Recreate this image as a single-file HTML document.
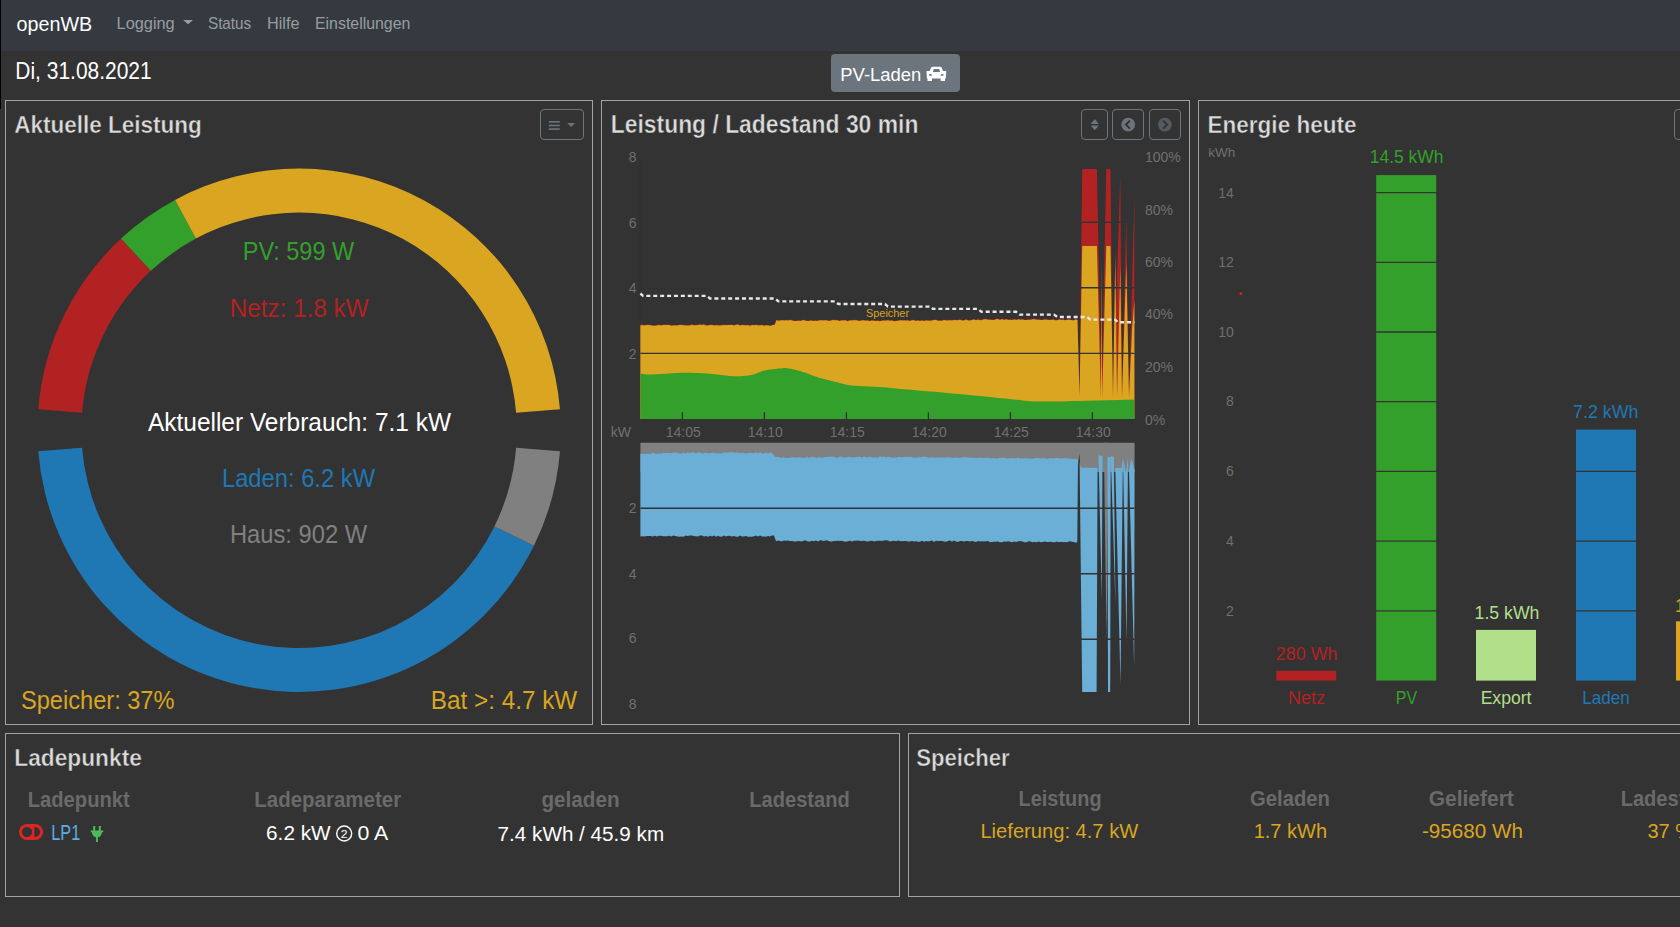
<!DOCTYPE html>
<html lang="de"><head><meta charset="utf-8"><title>openWB</title><style>
html,body{margin:0;padding:0}
body{width:1680px;height:927px;overflow:hidden;background:#333333;position:relative;font-family:"Liberation Sans",sans-serif}
.nav{position:absolute;left:0;top:0;width:1680px;height:51px;background:#343a40}
.stripe{position:absolute;left:0;top:0;width:1px;height:109px;background:#000}
.panel{position:absolute;box-sizing:border-box;border:1px solid #a3a3a3}
.btn{position:absolute;box-sizing:border-box;border:1px solid #6c757d;border-radius:4px}
.pvl{position:absolute;left:831px;top:54px;width:129px;height:38px;background:#6c757d;border-radius:4px}
svg.ov{position:absolute;left:0;top:0;font-family:"Liberation Sans",sans-serif}
</style></head>
<body>
<div class="nav"></div>
<div class="stripe"></div>
<div class="pvl"></div>
<div class="panel" style="left:5px;top:100px;width:588px;height:625px"></div>
<div class="panel" style="left:601px;top:100px;width:589px;height:625px"></div>
<div class="panel" style="left:1198px;top:100px;width:589px;height:625px"></div>
<div class="panel" style="left:5px;top:733px;width:895px;height:164px"></div>
<div class="panel" style="left:908px;top:733px;width:895px;height:164px"></div>
<div class="btn" style="left:540px;top:109px;width:44px;height:31px"></div>
<div class="btn" style="left:1081px;top:109px;width:27px;height:31px"></div>
<div class="btn" style="left:1112px;top:109px;width:32px;height:31px"></div>
<div class="btn" style="left:1149px;top:109px;width:32px;height:31px"></div>
<div class="btn" style="left:1674px;top:109px;width:44px;height:31px"></div>
<svg class="ov" width="1680" height="927" viewBox="0 0 1680 927">
<path fill="#b22222" d="M38.24,409.31 A261.7,261.7 0 0 1 120.96,238.59 L150.91,270.83 A217.7,217.7 0 0 0 82.10,412.84 Z"/>
<path fill="#33a02c" d="M120.96,238.59 A261.7,261.7 0 0 1 175.03,199.88 L195.89,238.62 A217.7,217.7 0 0 0 150.91,270.83 Z"/>
<path fill="#daa520" d="M175.03,199.88 A261.7,261.7 0 0 1 559.96,409.31 L516.10,412.84 A217.7,217.7 0 0 0 195.89,238.62 Z"/>
<path fill="#1f78b4" d="M38.24,451.29 A261.7,261.7 0 0 0 533.91,545.84 L494.43,526.42 A217.7,217.7 0 0 1 82.10,447.76 Z"/>
<path fill="#808080" d="M533.91,545.84 A261.7,261.7 0 0 0 559.96,451.29 L516.10,447.76 A217.7,217.7 0 0 1 494.43,526.42 Z"/>
<polygon fill="#b22222" points="640.4,419.0 640.4,324.7 642.5,324.6 644.5,324.9 646.6,324.6 648.6,324.5 650.7,324.8 652.7,325.3 654.8,325.2 656.8,325.1 658.9,324.6 661.0,324.9 663.0,324.6 665.1,324.5 667.1,324.4 669.2,324.5 671.2,325.2 673.3,325.1 675.3,325.0 677.4,325.0 679.4,324.4 681.5,324.5 683.6,324.8 685.6,324.9 687.7,325.0 689.7,325.0 691.8,324.2 693.8,324.7 695.9,324.7 697.9,324.5 700.0,324.2 702.0,324.5 704.0,324.1 706.0,325.0 708.1,324.9 710.1,324.6 712.1,324.4 714.1,325.0 716.1,324.7 718.1,325.0 720.1,325.0 722.1,324.7 724.2,324.6 726.2,324.8 728.2,324.6 730.2,324.4 732.2,324.5 734.2,325.0 736.2,324.3 738.3,324.3 740.3,324.9 742.3,324.6 744.3,324.8 746.3,324.8 748.3,324.7 750.3,325.3 752.4,324.5 754.4,324.8 756.4,324.6 758.4,325.0 760.4,324.7 762.4,324.8 764.4,325.2 766.4,324.8 768.5,325.0 770.5,325.4 772.5,324.6 774.5,324.6 776.5,319.7 778.5,320.3 780.5,320.1 782.6,319.8 784.6,319.9 786.6,319.7 788.6,320.0 790.7,319.6 792.7,320.2 794.7,320.4 796.7,320.5 798.8,320.3 800.8,320.5 802.8,319.6 804.8,319.9 806.9,320.5 808.9,320.4 810.9,320.0 812.9,320.5 815.0,320.2 817.0,320.4 819.0,319.9 821.0,319.8 823.1,320.1 825.1,319.8 827.1,320.0 829.1,320.6 831.2,320.0 833.2,319.6 835.2,319.7 837.2,319.8 839.3,320.4 841.3,320.0 843.3,320.0 845.3,319.8 847.4,320.7 849.4,320.1 851.4,319.9 853.4,319.7 855.5,319.7 857.5,319.9 859.5,320.4 861.5,319.9 863.6,319.8 865.6,320.2 867.6,320.0 869.6,320.7 871.7,319.9 873.7,320.3 875.7,320.5 877.7,320.2 879.8,320.7 881.8,320.2 883.8,320.0 885.8,320.2 887.9,319.8 889.9,320.2 891.9,320.0 893.9,320.7 896.0,320.6 898.0,320.3 900.0,319.8 902.0,320.0 904.0,320.0 906.0,319.9 908.0,319.9 910.0,320.5 912.0,319.8 914.0,319.7 916.0,320.5 918.0,320.1 920.0,320.5 922.0,319.9 924.0,320.4 926.0,320.1 928.0,320.2 930.0,320.2 932.0,319.9 934.0,319.5 936.0,319.5 938.0,320.2 940.0,320.2 942.0,320.2 944.0,319.6 946.0,319.9 948.0,320.0 950.0,319.8 952.0,319.9 954.0,319.6 956.0,319.7 958.0,319.7 960.0,319.3 962.0,319.9 964.0,319.9 966.0,319.0 968.0,319.9 970.0,319.9 972.0,319.5 974.0,318.9 976.0,319.7 978.0,318.9 980.0,319.7 982.0,319.4 984.0,318.8 986.0,318.8 988.0,319.3 990.0,319.2 992.0,319.4 994.0,319.5 996.0,318.8 998.0,318.5 1000.0,319.4 1002.0,318.5 1004.1,319.4 1006.1,318.7 1008.2,319.4 1010.2,319.3 1012.2,319.5 1014.3,319.1 1016.3,319.5 1018.4,318.8 1020.4,319.3 1022.4,319.0 1024.5,319.5 1026.5,319.4 1028.6,319.2 1030.6,319.2 1032.6,318.7 1034.7,318.8 1036.7,319.3 1038.8,319.2 1040.8,319.6 1042.8,319.4 1044.9,318.9 1046.9,319.2 1048.9,319.6 1051.0,319.4 1053.0,318.9 1055.1,319.7 1057.1,319.7 1059.1,319.0 1061.2,319.4 1063.2,319.3 1065.3,319.7 1067.3,319.2 1069.3,319.2 1071.4,319.4 1073.4,319.9 1075.5,319.1 1077.5,319.5 1079.5,397.0 1082.2,169.0 1096.9,169.0 1101.5,398.0 1106.3,169.0 1110.5,169.0 1113.0,398.0 1120.3,175.0 1122.0,398.0 1126.3,218.0 1129.0,398.0 1134.4,195.0 1134.4,419.0"/>
<polygon fill="#daa520" points="640.4,419.0 640.4,325.2 642.5,325.1 644.5,325.4 646.6,325.1 648.6,325.0 650.7,325.3 652.7,325.8 654.8,325.7 656.8,325.6 658.9,325.1 661.0,325.4 663.0,325.1 665.1,325.0 667.1,324.9 669.2,325.0 671.2,325.7 673.3,325.6 675.3,325.5 677.4,325.5 679.4,324.9 681.5,325.0 683.6,325.3 685.6,325.4 687.7,325.5 689.7,325.5 691.8,324.7 693.8,325.2 695.9,325.2 697.9,325.0 700.0,324.7 702.0,325.0 704.0,324.6 706.0,325.5 708.1,325.4 710.1,325.1 712.1,324.9 714.1,325.5 716.1,325.2 718.1,325.5 720.1,325.5 722.1,325.2 724.2,325.1 726.2,325.3 728.2,325.1 730.2,324.9 732.2,325.0 734.2,325.5 736.2,324.8 738.3,324.8 740.3,325.4 742.3,325.1 744.3,325.3 746.3,325.3 748.3,325.2 750.3,325.8 752.4,325.0 754.4,325.3 756.4,325.1 758.4,325.5 760.4,325.2 762.4,325.3 764.4,325.7 766.4,325.3 768.5,325.5 770.5,325.9 772.5,325.1 774.5,325.1 776.5,320.2 778.5,320.8 780.5,320.6 782.6,320.3 784.6,320.4 786.6,320.2 788.6,320.5 790.7,320.1 792.7,320.7 794.7,320.9 796.7,321.0 798.8,320.8 800.8,321.0 802.8,320.1 804.8,320.4 806.9,321.0 808.9,320.9 810.9,320.5 812.9,321.0 815.0,320.7 817.0,320.9 819.0,320.4 821.0,320.3 823.1,320.6 825.1,320.3 827.1,320.5 829.1,321.1 831.2,320.5 833.2,320.1 835.2,320.2 837.2,320.3 839.3,320.9 841.3,320.5 843.3,320.5 845.3,320.3 847.4,321.2 849.4,320.6 851.4,320.4 853.4,320.2 855.5,320.2 857.5,320.4 859.5,320.9 861.5,320.4 863.6,320.3 865.6,320.7 867.6,320.5 869.6,321.2 871.7,320.4 873.7,320.8 875.7,321.0 877.7,320.7 879.8,321.2 881.8,320.7 883.8,320.5 885.8,320.7 887.9,320.3 889.9,320.7 891.9,320.5 893.9,321.2 896.0,321.1 898.0,320.8 900.0,320.3 902.0,320.5 904.0,320.5 906.0,320.4 908.0,320.4 910.0,321.0 912.0,320.3 914.0,320.2 916.0,321.0 918.0,320.6 920.0,321.0 922.0,320.4 924.0,320.9 926.0,320.6 928.0,320.7 930.0,320.7 932.0,320.4 934.0,320.0 936.0,320.0 938.0,320.7 940.0,320.7 942.0,320.7 944.0,320.1 946.0,320.4 948.0,320.5 950.0,320.3 952.0,320.4 954.0,320.1 956.0,320.2 958.0,320.2 960.0,319.8 962.0,320.4 964.0,320.4 966.0,319.5 968.0,320.4 970.0,320.4 972.0,320.0 974.0,319.4 976.0,320.2 978.0,319.4 980.0,320.2 982.0,319.9 984.0,319.3 986.0,319.3 988.0,319.8 990.0,319.7 992.0,319.9 994.0,320.0 996.0,319.3 998.0,319.0 1000.0,319.9 1002.0,319.0 1004.1,319.9 1006.1,319.2 1008.2,319.9 1010.2,319.8 1012.2,320.0 1014.3,319.6 1016.3,320.0 1018.4,319.3 1020.4,319.8 1022.4,319.5 1024.5,320.0 1026.5,319.9 1028.6,319.7 1030.6,319.7 1032.6,319.2 1034.7,319.3 1036.7,319.8 1038.8,319.7 1040.8,320.1 1042.8,319.9 1044.9,319.4 1046.9,319.7 1048.9,320.1 1051.0,319.9 1053.0,319.4 1055.1,320.2 1057.1,320.2 1059.1,319.5 1061.2,319.9 1063.2,319.8 1065.3,320.2 1067.3,319.7 1069.3,319.7 1071.4,319.9 1073.4,320.4 1075.5,319.6 1077.5,320.0 1079.5,397.0 1082.2,246.0 1096.9,246.0 1100.9,398.0 1101.5,262.0 1102.1,398.0 1106.3,246.0 1110.5,246.0 1113.0,398.0 1115.3,254.0 1117.0,398.0 1120.3,266.0 1122.0,398.0 1126.3,264.0 1129.0,398.0 1132.0,330.0 1134.4,300.0 1134.4,419.0"/>
<polygon fill="#33a02c" points="640.4,419.0 640.7,373.6 641.8,373.7 643.1,373.9 644.8,374.2 646.8,374.4 649.4,374.5 652.5,374.5 656.4,374.3 661.1,374.0 666.3,373.7 671.6,373.3 676.9,373.0 681.8,372.8 686.3,372.8 690.7,372.8 695.0,372.9 699.2,373.1 703.4,373.3 707.7,373.6 712.1,374.0 716.7,374.5 721.2,375.0 725.6,375.5 729.8,376.0 733.6,376.2 737.0,376.3 740.1,376.2 743.0,376.0 745.7,375.8 748.3,375.4 750.9,375.0 753.4,374.4 755.7,373.7 757.9,372.8 760.1,371.9 762.3,371.1 764.7,370.5 767.3,370.0 770.0,369.5 772.8,369.2 775.5,368.9 778.1,368.6 780.3,368.4 782.1,368.2 783.5,368.1 784.8,368.0 786.0,368.1 787.3,368.2 789.0,368.4 791.0,368.8 793.1,369.2 795.3,369.8 797.7,370.4 800.2,371.1 802.7,371.9 805.4,372.8 808.2,373.8 811.1,374.9 814.1,376.0 817.1,377.1 820.0,378.0 822.9,378.8 825.9,379.6 828.9,380.3 831.8,381.0 834.6,381.7 837.3,382.3 839.6,382.9 841.6,383.5 843.4,384.0 845.4,384.5 847.9,385.0 851.0,385.4 854.8,385.7 859.0,386.0 863.7,386.2 868.7,386.4 874.2,386.7 880.0,387.1 886.4,387.6 893.3,388.2 900.7,388.9 908.3,389.6 915.8,390.2 923.2,390.9 930.4,391.5 937.5,392.1 944.7,392.8 951.9,393.4 959.1,394.0 966.4,394.7 974.1,395.4 982.2,396.2 990.4,397.1 998.2,397.9 1005.3,398.6 1011.3,399.2 1015.9,399.7 1019.4,400.1 1022.2,400.5 1024.7,400.8 1027.2,401.1 1030.3,401.3 1033.8,401.5 1037.4,401.6 1041.1,401.6 1044.8,401.6 1048.7,401.6 1052.7,401.6 1056.5,401.5 1060.0,401.5 1063.6,401.4 1067.7,401.2 1072.5,401.1 1078.6,400.9 1086.8,400.7 1096.9,400.4 1107.9,400.2 1118.5,399.9 1127.5,399.7 1133.9,399.5 1134.4,419.0"/>
<line x1="640.4" x2="1134.4" y1="353.4" y2="353.4" stroke="#333333" stroke-width="1.4"/>
<line x1="640.4" x2="1134.4" y1="287.8" y2="287.8" stroke="#333333" stroke-width="1.4"/>
<line x1="640.4" x2="1134.4" y1="222.2" y2="222.2" stroke="#333333" stroke-width="1.4"/>
<line x1="640.4" x2="1134.4" y1="156.6" y2="156.6" stroke="#333333" stroke-width="1.4"/>
<line x1="682.4" x2="682.4" y1="412.3" y2="419.0" stroke="#2e2e2e" stroke-width="1.3"/>
<line x1="764.4" x2="764.4" y1="412.3" y2="419.0" stroke="#2e2e2e" stroke-width="1.3"/>
<line x1="846.4" x2="846.4" y1="412.3" y2="419.0" stroke="#2e2e2e" stroke-width="1.3"/>
<line x1="928.4" x2="928.4" y1="412.3" y2="419.0" stroke="#2e2e2e" stroke-width="1.3"/>
<line x1="1010.4" x2="1010.4" y1="412.3" y2="419.0" stroke="#2e2e2e" stroke-width="1.3"/>
<line x1="1092.4" x2="1092.4" y1="412.3" y2="419.0" stroke="#2e2e2e" stroke-width="1.3"/>
<line x1="640" x2="640" y1="157" y2="323" stroke="#313131" stroke-width="1"/>
<polyline fill="none" stroke="#e8e8e8" stroke-width="2.4" stroke-dasharray="4 2.9" points="640.4,293.5 643.0,295.9 707.0,295.9 710.0,298.5 775.0,298.5 778.5,301.4 835.0,301.4 838.5,304.0 885.0,304.0 888.0,306.6 930.0,306.6 933.0,308.9 978.0,308.9 981.5,311.8 1016.0,311.8 1019.5,314.6 1054.0,314.6 1057.5,317.0 1087.0,317.0 1090.5,319.6 1115.0,319.6 1118.0,322.2 1134.4,322.2"/>
<polygon fill="#808080" points="640.4,442.8 1134.6,442.8 1134.6,472 640.4,472"/>
<polygon fill="#808080" points="1103.8,442.8 1108.5,442.8 1106.6,640"/>
<polygon fill="#333" points="1077.3,472 1079.4,453 1080.6,472"/>
<polygon fill="#6baed6" points="640.4,453.7 642.5,453.8 644.5,453.9 646.6,454.0 648.6,453.7 650.7,454.0 652.7,452.7 654.8,453.3 656.8,453.9 658.9,453.5 661.0,453.8 663.0,452.7 665.1,453.2 667.1,452.8 669.2,453.2 671.2,453.2 673.3,452.4 675.3,452.7 677.4,452.8 679.4,453.6 681.5,453.4 683.6,452.5 685.6,453.4 687.7,452.4 689.7,453.1 691.8,452.4 693.8,452.2 695.9,453.4 697.9,452.4 700.0,452.4 702.0,453.5 704.0,453.3 706.0,452.5 708.0,453.5 710.0,452.9 712.0,453.1 714.0,452.4 716.0,453.5 718.0,453.1 720.0,453.5 722.0,453.4 724.0,452.6 726.0,452.7 728.0,452.4 730.0,452.4 732.0,452.3 734.0,452.6 736.0,453.0 738.0,452.2 740.0,453.2 742.0,452.7 744.0,452.7 746.0,453.4 748.0,452.9 750.0,452.7 752.0,452.9 754.0,453.2 756.0,452.3 758.0,453.6 760.0,452.3 762.0,453.3 764.0,453.5 766.0,452.3 768.0,453.4 770.0,452.8 772.0,453.1 775.0,456.8 777.0,456.9 779.0,457.0 781.0,458.1 783.1,457.0 785.1,457.8 787.1,458.1 789.1,458.1 791.1,457.2 793.1,457.2 795.2,457.5 797.2,457.8 799.2,456.9 801.2,457.7 803.2,457.8 805.2,457.9 807.3,456.7 809.3,458.0 811.3,456.8 813.3,457.1 815.3,457.5 817.3,457.9 819.4,457.1 821.4,457.9 823.4,457.4 825.4,457.0 827.4,457.0 829.4,456.8 831.5,456.7 833.5,456.8 835.5,457.5 837.5,457.9 839.5,456.8 841.5,456.6 843.5,457.9 845.6,457.3 847.6,457.1 849.6,456.8 851.6,457.3 853.6,457.6 855.6,457.1 857.7,457.1 859.7,456.5 861.7,457.7 863.7,456.5 865.7,457.1 867.7,457.6 869.8,456.6 871.8,457.4 873.8,457.7 875.8,457.3 877.8,457.5 879.8,456.5 881.9,457.0 883.9,456.6 885.9,457.5 887.9,456.8 889.9,457.0 891.9,457.7 894.0,457.5 896.0,457.7 898.0,456.9 900.0,457.0 902.0,457.3 904.0,457.0 906.0,456.8 908.0,456.9 910.0,456.6 912.0,456.9 914.0,457.8 916.0,457.8 918.0,457.3 920.0,457.2 922.0,456.9 924.0,456.6 926.0,456.9 928.0,457.6 930.0,457.8 932.0,457.1 934.0,457.7 936.0,457.7 938.0,457.6 940.0,457.5 942.0,457.7 944.0,457.2 946.0,457.7 948.0,457.1 950.0,457.4 952.0,457.8 954.0,457.7 956.0,457.2 958.0,458.1 960.0,457.7 962.0,457.6 964.0,456.8 966.0,457.6 968.0,457.2 970.0,457.8 972.0,457.5 974.0,458.0 976.0,457.8 978.0,458.0 980.0,457.4 982.0,457.9 984.0,458.0 986.0,458.1 988.0,457.5 990.0,458.2 992.0,458.3 994.0,458.0 996.0,458.4 998.0,458.4 1000.0,457.8 1002.0,457.9 1004.0,457.4 1006.0,458.4 1008.0,458.5 1010.0,457.9 1012.0,458.2 1014.0,458.3 1016.0,458.4 1018.0,457.6 1020.0,458.5 1022.0,458.2 1024.0,458.4 1026.0,458.1 1028.0,458.4 1030.0,458.6 1032.0,458.5 1034.0,458.6 1036.0,457.7 1038.0,457.9 1040.0,458.3 1042.0,458.6 1044.0,458.0 1046.0,458.7 1048.0,458.7 1050.0,457.9 1052.0,458.5 1054.0,458.2 1056.0,458.0 1058.0,458.1 1060.0,458.4 1062.0,458.3 1064.0,458.3 1066.0,458.1 1068.0,458.7 1070.0,458.6 1072.0,459.0 1074.0,459.0 1076.0,458.5 1078.0,460.0 1077.3,542.4 1075.3,542.4 1073.2,542.0 1071.2,541.6 1069.2,541.3 1067.1,542.2 1065.1,541.9 1063.1,542.3 1061.0,541.7 1059.0,542.3 1057.0,541.6 1054.9,542.3 1052.9,542.2 1050.9,541.7 1048.8,541.9 1046.8,542.1 1044.8,541.4 1042.7,541.9 1040.7,542.2 1038.7,541.5 1036.6,542.2 1034.6,542.0 1032.5,542.3 1030.5,541.5 1028.5,541.2 1026.4,542.2 1024.4,542.2 1022.4,541.6 1020.3,541.1 1018.3,541.3 1016.3,541.9 1014.2,541.4 1012.2,542.3 1010.2,541.8 1008.1,541.2 1006.1,541.8 1004.1,541.4 1002.0,542.2 1000.0,542.2 998.0,541.6 996.0,541.8 994.0,541.8 992.0,542.0 990.0,542.2 988.0,540.9 986.0,541.3 984.0,541.6 982.0,541.2 980.0,541.6 978.0,540.9 976.0,542.0 974.0,541.5 972.0,540.9 970.0,541.6 968.0,541.1 966.0,541.0 964.0,541.4 962.0,540.9 960.0,541.0 958.0,541.9 956.0,541.6 954.0,540.6 952.0,541.7 950.0,540.6 948.0,541.1 946.0,541.8 944.0,541.4 942.0,541.0 940.0,541.1 938.0,541.1 936.0,540.7 934.0,541.9 932.0,540.6 930.0,541.1 928.0,541.5 926.0,541.0 924.0,541.8 922.0,540.8 920.0,541.8 918.0,541.7 916.0,541.3 914.0,541.6 912.0,541.0 910.0,541.5 908.0,541.5 906.0,541.1 904.0,541.0 902.0,541.3 900.0,540.9 898.0,540.4 896.0,541.3 894.0,540.7 892.0,541.0 890.0,541.4 888.0,540.5 886.0,540.3 884.0,540.5 882.0,541.1 880.0,540.8 878.0,540.7 876.0,540.9 874.0,541.6 872.0,540.7 870.0,540.9 868.0,541.5 866.0,541.2 864.0,540.7 862.0,541.0 860.0,541.0 858.0,540.5 856.0,540.8 854.0,540.7 852.0,541.4 850.0,540.8 848.0,541.2 846.0,541.7 844.0,541.6 842.0,540.8 840.0,541.1 838.0,540.7 836.0,540.9 834.0,541.0 832.0,541.4 830.0,541.6 828.0,540.7 826.0,540.3 824.0,540.9 822.0,540.4 820.0,540.3 818.0,541.4 816.0,540.5 814.0,541.3 812.0,540.8 810.0,541.6 808.0,541.5 806.0,540.4 804.0,540.6 802.0,541.6 800.0,541.2 798.0,540.9 796.0,541.4 794.0,541.4 792.0,541.0 790.0,541.0 788.0,540.4 786.0,540.8 784.0,540.5 782.0,541.2 780.0,541.1 778.0,540.5 776.0,541.2 774.0,535.6 772.0,535.6 770.0,536.4 768.0,536.1 766.0,536.7 764.0,536.4 762.0,536.4 760.0,535.6 758.0,536.6 756.0,535.6 754.0,536.3 752.0,536.7 750.0,536.7 748.0,536.7 746.0,536.1 744.0,536.4 742.0,536.5 740.0,535.6 738.0,536.7 736.0,536.7 734.0,536.0 732.0,536.5 730.0,536.0 728.0,535.8 726.0,536.4 724.0,535.5 722.0,536.5 720.0,536.7 718.0,535.7 716.0,536.7 714.0,535.5 712.0,536.5 710.0,535.7 708.0,536.7 706.0,535.9 704.0,536.6 702.0,535.4 700.0,535.4 697.9,536.5 695.9,536.2 693.8,536.1 691.8,535.4 689.7,535.6 687.7,535.9 685.6,535.5 683.6,536.8 681.5,536.5 679.4,536.8 677.4,536.5 675.3,536.0 673.3,535.6 671.2,536.6 669.2,535.7 667.1,536.3 665.1,536.2 663.0,536.3 661.0,535.7 658.9,535.7 656.8,536.4 654.8,535.7 652.7,536.4 650.7,535.9 648.6,536.1 646.6,536.0 644.5,536.6 642.5,536.3 640.4,536.5"/>
<polygon fill="#6baed6" points="1079.6,462 1081,467.5 1097.6,468 1096.6,692 1082.2,692"/>
<polygon fill="#6baed6" points="1098.5,455 1101.7,456 1102.5,455.9 1101.8,600"/>
<polygon fill="#6baed6" points="1107.5,457 1110.7,457 1110.2,692 1108,692"/>
<polygon fill="#6baed6" points="1110.8,456.6 1113.8,456.6 1115.5,606"/>
<polygon fill="#6baed6" points="1115.3,468 1121.4,468 1122.9,458 1120.5,685"/>
<polygon fill="#6baed6" points="1123,458 1125.9,472.5 1128,458 1126.5,643"/>
<polygon fill="#6baed6" points="1129,470 1131.2,458 1134.6,470 1134.2,667"/>
<line x1="640.4" x2="1134.6" y1="508.3" y2="508.3" stroke="#333333" stroke-width="1.4"/>
<line x1="640.4" x2="1134.6" y1="573.8" y2="573.8" stroke="#333333" stroke-width="1.4"/>
<line x1="640.4" x2="1134.6" y1="639.3" y2="639.3" stroke="#333333" stroke-width="1.4"/>
<rect x="1276.3" y="670.8" width="60" height="9.8" fill="#b22222"/>
<rect x="1376.2" y="175.1" width="60" height="505.5" fill="#33a02c"/>
<rect x="1476" y="629.9" width="60" height="50.7" fill="#b2df8a"/>
<rect x="1576" y="429.6" width="60" height="251.0" fill="#1f78b4"/>
<rect x="1676" y="621.3" width="60" height="59.3" fill="#daa520"/>
<line x1="1245" x2="1680" y1="610.9" y2="610.9" stroke="#333333" stroke-width="1.3"/>
<line x1="1245" x2="1680" y1="541.2" y2="541.2" stroke="#333333" stroke-width="1.3"/>
<line x1="1245" x2="1680" y1="471.4" y2="471.4" stroke="#333333" stroke-width="1.3"/>
<line x1="1245" x2="1680" y1="401.7" y2="401.7" stroke="#333333" stroke-width="1.3"/>
<line x1="1245" x2="1680" y1="332.0" y2="332.0" stroke="#333333" stroke-width="1.3"/>
<line x1="1245" x2="1680" y1="262.3" y2="262.3" stroke="#333333" stroke-width="1.3"/>
<line x1="1245" x2="1680" y1="192.6" y2="192.6" stroke="#333333" stroke-width="1.3"/>
<circle cx="1240.9" cy="293.7" r="1.4" fill="#e02020"/>
<text x="636.5" y="162.1" font-size="14" fill="#707070" text-anchor="end">8</text>
<text x="636.5" y="227.9" font-size="14" fill="#707070" text-anchor="end">6</text>
<text x="636.5" y="293.4" font-size="14" fill="#707070" text-anchor="end">4</text>
<text x="636.5" y="359.2" font-size="14" fill="#707070" text-anchor="end">2</text>
<text x="631" y="436.5" font-size="14" fill="#707070" text-anchor="end">kW</text>
<text x="1145" y="162.1" font-size="14" fill="#707070" text-anchor="start">100%</text>
<text x="1145" y="214.9" font-size="14" fill="#707070" text-anchor="start">80%</text>
<text x="1145" y="267.3" font-size="14" fill="#707070" text-anchor="start">60%</text>
<text x="1145" y="319.4" font-size="14" fill="#707070" text-anchor="start">40%</text>
<text x="1145" y="371.9" font-size="14" fill="#707070" text-anchor="start">20%</text>
<text x="1145" y="424.7" font-size="14" fill="#707070" text-anchor="start">0%</text>
<text x="683.3" y="436.8" font-size="14" fill="#707070" text-anchor="middle">14:05</text>
<text x="765.3" y="436.8" font-size="14" fill="#707070" text-anchor="middle">14:10</text>
<text x="847.3" y="436.8" font-size="14" fill="#707070" text-anchor="middle">14:15</text>
<text x="929.3" y="436.8" font-size="14" fill="#707070" text-anchor="middle">14:20</text>
<text x="1011.3" y="436.8" font-size="14" fill="#707070" text-anchor="middle">14:25</text>
<text x="1093.3000000000002" y="436.8" font-size="14" fill="#707070" text-anchor="middle">14:30</text>
<text x="636.5" y="512.5" font-size="14" fill="#707070" text-anchor="end">2</text>
<text x="636.5" y="578.6" font-size="14" fill="#707070" text-anchor="end">4</text>
<text x="636.5" y="643" font-size="14" fill="#707070" text-anchor="end">6</text>
<text x="636.5" y="709" font-size="14" fill="#707070" text-anchor="end">8</text>
<text x="1208.3" y="156.9" font-size="13.5" fill="#707070" text-anchor="start">kWh</text>
<text x="1233.8" y="197.6" font-size="14" fill="#707070" text-anchor="end">14</text>
<text x="1233.8" y="267.3" font-size="14" fill="#707070" text-anchor="end">12</text>
<text x="1233.8" y="337.4" font-size="14" fill="#707070" text-anchor="end">10</text>
<text x="1233.8" y="406.3" font-size="14" fill="#707070" text-anchor="end">8</text>
<text x="1233.8" y="476.2" font-size="14" fill="#707070" text-anchor="end">6</text>
<text x="1233.8" y="546" font-size="14" fill="#707070" text-anchor="end">4</text>
<text x="1233.8" y="616.3" font-size="14" fill="#707070" text-anchor="end">2</text>
<rect x="548.8" y="121.0" width="11" height="1.6" fill="#6c757d"/>
<rect x="548.8" y="124.7" width="11" height="1.6" fill="#6c757d"/>
<rect x="548.8" y="128.29999999999998" width="11" height="1.6" fill="#6c757d"/>
<polygon points="567.2,122.9 575,122.9 571.1,127" fill="#6c757d"/>
<polygon points="1094.8,118.9 1090.7,123.9 1098.9,123.9" fill="#6c757d"/>
<polygon points="1090.7,125.4 1098.9,125.4 1094.8,130.2" fill="#6c757d"/>
<circle cx="1128.2" cy="124.6" r="6.9" fill="#6c757d"/>
<polyline points="1130,120.6 1126,124.6 1130,128.6" fill="none" stroke="#333" stroke-width="2"/>
<circle cx="1164.9" cy="124.6" r="6.9" fill="#555b61"/>
<polyline points="1163.1,120.6 1167.1,124.6 1163.1,128.6" fill="none" stroke="#333" stroke-width="2"/>
<polygon points="183.2,20 193,20 188.1,24.3" fill="#9a9da0"/>
<path fill="#fff" fill-rule="evenodd" d="M926.5,71 L929.8,71 L931,67.8 Q931.6,66.75 932.8,66.75 L940,66.75 Q941.2,66.75 941.8,67.8 L942.9,71 L946.2,71 L945.8,78.6 L945,78.6 L945,81 L940.7,81 L940.7,78.6 L932,78.6 L932,81 L927.5,81 L927.5,78.6 L926.9,78.6 Z M932.9,72 L933.8,69.1 L939.2,69.1 L940.1,72 Z M929.1,73.9 L931.5,74.2 L932,75.8 L929.1,75.8 Z M943.4,73.9 L941,74.2 L940.5,75.8 L943.4,75.8 Z"/>
<path fill="#dc2626" fill-rule="evenodd" d="M27,824 L35,824 A8,8 0 0 1 35,840 L27,840 A8,8 0 0 1 27,824 Z M27,826.9 A5.1,5.1 0 1 0 27.01,826.9 Z M34.4,826.9 L35,826.9 A5.1,5.1 0 0 1 35,837.1 L34.4,837.1 Z"/>
<g fill="#4cb95c"><rect x="93.2" y="826" width="2" height="5"/><rect x="98.8" y="826" width="2" height="5"/><path d="M90.7,830.5 L103.2,830.5 L103.2,832.2 L102,832.2 Q101.5,836.5 97.9,837.2 L97.9,842 L96,842 L96,837.2 Q92.4,836.5 91.9,832.2 L90.7,832.2 Z"/></g>
<circle cx="344.2" cy="833.5" r="7.5" fill="none" stroke="#fff" stroke-width="1.4"/>
<text x="340.8" y="838" font-size="11.6" font-weight="400" fill="#fff" textLength="6.8" lengthAdjust="spacingAndGlyphs">2</text>
<text x="16.52" y="31.00" font-size="20.20" font-weight="400" fill="#ffffff" textLength="75.71" lengthAdjust="spacingAndGlyphs">openWB</text>
<text x="116.58" y="28.90" font-size="15.99" font-weight="400" fill="#9a9da0" textLength="58.08" lengthAdjust="spacingAndGlyphs">Logging</text>
<text x="207.94" y="28.90" font-size="15.99" font-weight="400" fill="#9a9da0" textLength="43.33" lengthAdjust="spacingAndGlyphs">Status</text>
<text x="266.98" y="28.90" font-size="15.99" font-weight="400" fill="#9a9da0" textLength="32.57" lengthAdjust="spacingAndGlyphs">Hilfe</text>
<text x="315.01" y="28.90" font-size="15.99" font-weight="400" fill="#9a9da0" textLength="95.38" lengthAdjust="spacingAndGlyphs">Einstellungen</text>
<text x="15.29" y="79.00" font-size="23.11" font-weight="400" fill="#ffffff" textLength="136.41" lengthAdjust="spacingAndGlyphs">Di, 31.08.2021</text>
<text x="840.32" y="80.90" font-size="18.75" font-weight="400" fill="#ffffff" textLength="81.05" lengthAdjust="spacingAndGlyphs">PV-Laden</text>
<text x="14.20" y="133.00" font-size="24.71" font-weight="700" fill="#dcdcdc" stroke="#333333" stroke-width="0.45" textLength="187.50" lengthAdjust="spacingAndGlyphs">Aktuelle Leistung</text>
<text x="610.78" y="133.00" font-size="24.85" font-weight="700" fill="#dcdcdc" stroke="#333333" stroke-width="0.45" textLength="307.61" lengthAdjust="spacingAndGlyphs">Leistung / Ladestand 30 min</text>
<text x="1207.46" y="132.80" font-size="24.13" font-weight="700" fill="#dcdcdc" stroke="#333333" stroke-width="0.45" textLength="149.14" lengthAdjust="spacingAndGlyphs">Energie heute</text>
<text x="14.26" y="766.30" font-size="24.13" font-weight="700" fill="#dcdcdc" stroke="#333333" stroke-width="0.45" textLength="127.64" lengthAdjust="spacingAndGlyphs">Ladepunkte</text>
<text x="916.15" y="765.50" font-size="23.26" font-weight="700" fill="#dcdcdc" stroke="#333333" stroke-width="0.45" textLength="93.56" lengthAdjust="spacingAndGlyphs">Speicher</text>
<text x="242.76" y="259.70" font-size="25.58" font-weight="400" fill="#33a02c" textLength="111.41" lengthAdjust="spacingAndGlyphs">PV: 599 W</text>
<text x="229.77" y="316.80" font-size="25.87" font-weight="400" fill="#b22222" textLength="138.89" lengthAdjust="spacingAndGlyphs">Netz: 1.8 kW</text>
<text x="148.00" y="430.50" font-size="25.44" font-weight="400" fill="#ffffff" textLength="302.99" lengthAdjust="spacingAndGlyphs">Aktueller Verbrauch: 7.1 kW</text>
<text x="221.95" y="486.70" font-size="25.73" font-weight="400" fill="#1f78b4" textLength="153.10" lengthAdjust="spacingAndGlyphs">Laden: 6.2 kW</text>
<text x="229.89" y="543.20" font-size="24.85" font-weight="400" fill="#808080" textLength="137.34" lengthAdjust="spacingAndGlyphs">Haus: 902 W</text>
<text x="20.99" y="708.80" font-size="26.02" font-weight="400" fill="#daa520" textLength="153.51" lengthAdjust="spacingAndGlyphs">Speicher: 37%</text>
<text x="430.83" y="708.80" font-size="26.02" font-weight="400" fill="#daa520" textLength="146.38" lengthAdjust="spacingAndGlyphs">Bat &gt;: 4.7 kW</text>
<text x="27.67" y="806.80" font-size="21.66" font-weight="700" fill="#6a6a6a" textLength="102.19" lengthAdjust="spacingAndGlyphs">Ladepunkt</text>
<text x="254.25" y="806.80" font-size="21.66" font-weight="700" fill="#6a6a6a" textLength="146.91" lengthAdjust="spacingAndGlyphs">Ladeparameter</text>
<text x="541.44" y="806.80" font-size="21.66" font-weight="700" fill="#6a6a6a" textLength="78.10" lengthAdjust="spacingAndGlyphs">geladen</text>
<text x="749.27" y="806.80" font-size="21.66" font-weight="700" fill="#6a6a6a" textLength="100.47" lengthAdjust="spacingAndGlyphs">Ladestand</text>
<text x="51.25" y="840.00" font-size="21.80" font-weight="400" fill="#5aaee6" textLength="28.94" lengthAdjust="spacingAndGlyphs">LP1</text>
<text x="266.09" y="840.30" font-size="20.64" font-weight="400" fill="#ffffff" textLength="64.60" lengthAdjust="spacingAndGlyphs">6.2 kW</text>
<text x="357.50" y="840.30" font-size="20.64" font-weight="400" fill="#ffffff" textLength="30.72" lengthAdjust="spacingAndGlyphs">0 A</text>
<text x="497.60" y="840.70" font-size="20.64" font-weight="400" fill="#ffffff" textLength="166.52" lengthAdjust="spacingAndGlyphs">7.4 kWh / 45.9 km</text>
<text x="1018.58" y="806.20" font-size="21.66" font-weight="700" fill="#6a6a6a" textLength="83.00" lengthAdjust="spacingAndGlyphs">Leistung</text>
<text x="1249.96" y="806.20" font-size="21.66" font-weight="700" fill="#6a6a6a" textLength="80.00" lengthAdjust="spacingAndGlyphs">Geladen</text>
<text x="1428.63" y="806.20" font-size="21.66" font-weight="700" fill="#6a6a6a" textLength="85.19" lengthAdjust="spacingAndGlyphs">Geliefert</text>
<text x="1620.67" y="806.20" font-size="21.66" font-weight="700" fill="#6a6a6a" textLength="100.47" lengthAdjust="spacingAndGlyphs">Ladestand</text>
<text x="980.42" y="838.00" font-size="20.64" font-weight="400" fill="#daa520" textLength="157.84" lengthAdjust="spacingAndGlyphs">Lieferung: 4.7 kW</text>
<text x="1253.63" y="838.00" font-size="20.64" font-weight="400" fill="#daa520" textLength="73.41" lengthAdjust="spacingAndGlyphs">1.7 kWh</text>
<text x="1421.90" y="838.00" font-size="20.64" font-weight="400" fill="#daa520" textLength="100.99" lengthAdjust="spacingAndGlyphs">-95680 Wh</text>
<text x="1647.43" y="838.00" font-size="20.64" font-weight="400" fill="#daa520" textLength="45.58" lengthAdjust="spacingAndGlyphs">37 %</text>
<text x="1275.75" y="660.00" font-size="18.90" font-weight="400" fill="#b22222" textLength="61.76" lengthAdjust="spacingAndGlyphs">280 Wh</text>
<text x="1369.78" y="163.00" font-size="18.90" font-weight="400" fill="#33a02c" textLength="73.70" lengthAdjust="spacingAndGlyphs">14.5 kWh</text>
<text x="1474.56" y="619.00" font-size="18.90" font-weight="400" fill="#b2df8a" textLength="64.89" lengthAdjust="spacingAndGlyphs">1.5 kWh</text>
<text x="1573.06" y="417.70" font-size="18.90" font-weight="400" fill="#1f78b4" textLength="65.31" lengthAdjust="spacingAndGlyphs">7.2 kWh</text>
<text x="1675.06" y="612.00" font-size="18.90" font-weight="400" fill="#daa520" textLength="64.89" lengthAdjust="spacingAndGlyphs">1.7 kWh</text>
<text x="1287.90" y="703.80" font-size="18.17" font-weight="400" fill="#b22222" textLength="37.34" lengthAdjust="spacingAndGlyphs">Netz</text>
<text x="1395.82" y="703.80" font-size="18.17" font-weight="400" fill="#33a02c" textLength="21.28" lengthAdjust="spacingAndGlyphs">PV</text>
<text x="1480.63" y="703.80" font-size="18.17" font-weight="400" fill="#b2df8a" textLength="50.87" lengthAdjust="spacingAndGlyphs">Export</text>
<text x="1582.16" y="703.80" font-size="18.17" font-weight="400" fill="#1f78b4" textLength="47.51" lengthAdjust="spacingAndGlyphs">Laden</text>
<text x="866.00" y="316.90" font-size="11.48" font-weight="400" fill="#daa520" textLength="43.05" lengthAdjust="spacingAndGlyphs">Speicher</text>
</svg>
</body></html>
